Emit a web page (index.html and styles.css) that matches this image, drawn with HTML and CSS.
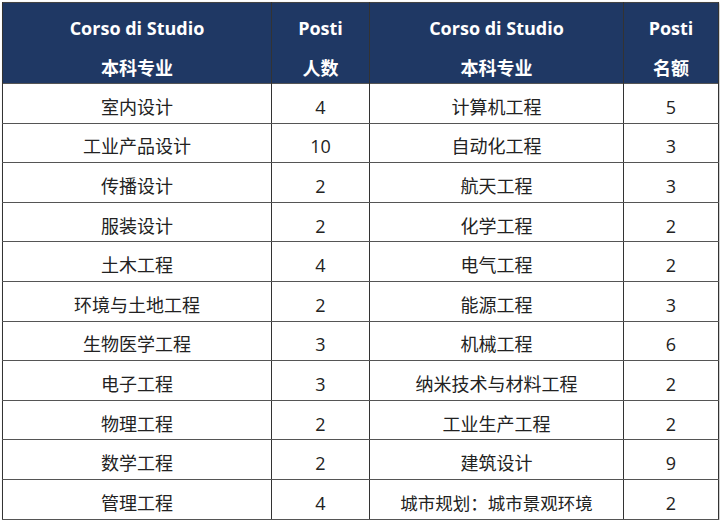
FILE: index.html
```html
<!DOCTYPE html>
<html lang="zh">
<head>
<meta charset="utf-8">
<title>Corso di Studio</title>
<link rel="stylesheet" href="styles.css">
</head>
<body>
<table class="posti">
  <colgroup>
    <col class="c-name1"><col class="c-num1"><col class="c-name2"><col class="c-num2">
  </colgroup>
  <thead>
    <tr>
      <th><div class="hbox"><span class="hl">Corso di Studio</span><span class="hl">本科专业</span></div></th>
      <th><div class="hbox"><span class="hl">Posti</span><span class="hl">人数</span></div></th>
      <th><div class="hbox"><span class="hl">Corso di Studio</span><span class="hl">本科专业</span></div></th>
      <th><div class="hbox"><span class="hl">Posti</span><span class="hl">名额</span></div></th>
    </tr>
  </thead>
  <tbody>
    <tr><td>室内设计</td><td>4</td><td>计算机工程</td><td>5</td></tr>
    <tr><td>工业产品设计</td><td>10</td><td>自动化工程</td><td>3</td></tr>
    <tr><td>传播设计</td><td>2</td><td>航天工程</td><td>3</td></tr>
    <tr><td>服装设计</td><td>2</td><td>化学工程</td><td>2</td></tr>
    <tr><td>土木工程</td><td>4</td><td>电气工程</td><td>2</td></tr>
    <tr><td>环境与土地工程</td><td>2</td><td>能源工程</td><td>3</td></tr>
    <tr><td>生物医学工程</td><td>3</td><td>机械工程</td><td>6</td></tr>
    <tr><td>电子工程</td><td>3</td><td>纳米技术与材料工程</td><td>2</td></tr>
    <tr><td>物理工程</td><td>2</td><td>工业生产工程</td><td>2</td></tr>
    <tr><td>数学工程</td><td>2</td><td>建筑设计</td><td>9</td></tr>
    <tr><td>管理工程</td><td>4</td><td class="small">城市规划：城市景观环境</td><td>2</td></tr>
  </tbody>
</table>
</body>
</html>
```
FILE: styles.css
```css
html, body {
  margin: 0;
  padding: 0;
  background: #ffffff;
}
body {
  padding: 2px 0 0 2px;
  font-family: "Open Sans", "Noto Sans CJK SC", sans-serif;
  color: #222222;
}
.posti {
  border-collapse: collapse;
  width: 716px;
  table-layout: fixed;
  border: 1px solid #444444;
  box-shadow: 1px 1px 2px #bbbbbb;
}
.c-name1 { width: 269px; }
.c-num1 { width: 98px; }
.c-name2 { width: 254px; }
.c-num2 { width: 95px; }

.posti th {
  background: #1f3864;
  color: #ffffff;
  font-weight: 700;
  font-size: 18px;
  padding: 0;
  border-left: 1px solid #333333;
  border-right: 1px solid #333333;
  vertical-align: top;
}
.hbox {
  height: 80px;
  box-sizing: border-box;
  padding-top: 5px;
}
.hl {
  display: block;
  line-height: 40px;
  height: 40px;
}
.hl + .hl {
  height: 35px;
}
.posti td {
  height: 39.6px;
  text-align: center;
  font-size: 18px;
  line-height: 22px;
  padding: 7px 0 0 0;
  box-sizing: border-box;
  border: 1px solid #555555;
  border-left-color: #333333;
  border-right-color: #333333;
}
.posti td.small {
  font-size: 17.5px;
}
```
